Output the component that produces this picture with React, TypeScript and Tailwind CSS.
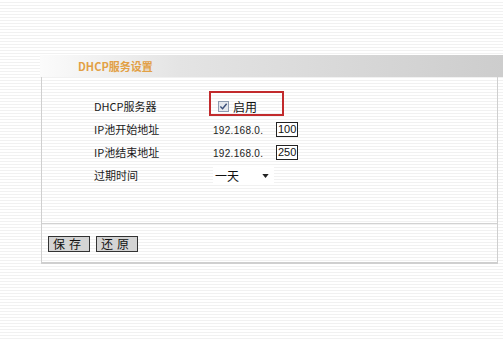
import { ChevronDown } from "lucide-react";

const CJK = "font-['SimSun','Noto_Sans_CJK_SC',sans-serif]";

function Row({ label, children }: { label: string; children: React.ReactNode }) {
	return (
		<div className="flex h-[23px] items-center">
			<div className={`w-[119px] text-[11px] text-[#1a1a1a] ${CJK}`}>{label}</div>
			<div className="relative flex items-center">{children}</div>
		</div>
	);
}

function IpInput({ value }: { value: string }) {
	return (
		<div className="flex items-center">
			<span className="w-[63px] pt-[2px] font-['Liberation_Sans',sans-serif] text-[10px] tracking-[0.3px] text-[#222]">
				192.168.0.
			</span>
			<span className="flex h-[15px] w-[22px] items-center border border-[#222] bg-white pl-[1px] font-['Liberation_Sans',sans-serif] text-[11px] leading-none text-[#111]">
				{value}
			</span>
		</div>
	);
}

export default function App() {
	return (
		<div className="h-[339px] w-[503px] overflow-hidden bg-[repeating-linear-gradient(to_bottom,#ffffff_0px,#ffffff_2px,#f1f1f1_2px,#f1f1f1_3px)] pt-[55px]">
			<div className="ml-[40px] flex h-[22px] items-center bg-[linear-gradient(to_right,#fbfbfb_0%,#e4e4e4_30%,#cdcdcd_100%)] pl-[38px]">
				<span className={`text-[11px] font-bold text-[#e2a045] ${CJK}`}>DHCP服务设置</span>
			</div>
			<div className="ml-[41px] mr-[5px] h-[187px] border-b-2 border-l border-r border-[#cfcfcf]">
				<div className="h-[147px] border-b border-[#d2d2d2] pl-[52px] pt-[18px]">
					<Row label="DHCP服务器">
						<div className="absolute -top-[7px] -left-[4px] h-[25px] w-[75px] border-2 border-[#c22a2c]" />
						<div className="ml-[5px] flex items-center gap-[4px]">
							<span className="flex h-[11px] w-[11px] items-center justify-center border border-[#8d9bb0] bg-[#e4e8ee]">
								<svg viewBox="0 0 10 10" className="h-[9px] w-[9px]">
									<path d="M1.5 5 L4 7.5 L8.5 2" fill="none" stroke="#3a4f7a" strokeWidth="1.6" />
								</svg>
							</span>
							<span className={`text-[12px] text-[#111] ${CJK}`}>启用</span>
						</div>
					</Row>
					<Row label="IP池开始地址">
						<IpInput value="100" />
					</Row>
					<Row label="IP池结束地址">
						<IpInput value="250" />
					</Row>
					<Row label="过期时间">
						<div className="flex h-[18px] w-[61px] items-center justify-between bg-white pl-[2px] pr-[5px]">
							<span className={`text-[12px] text-[#111] ${CJK}`}>一天</span>
							<svg viewBox="0 0 8 5" className="h-[4px] w-[7px]">
								<path d="M0 0 H8 L4 5 Z" fill="#222" />
							</svg>
						</div>
					</Row>
				</div>
				<div className="flex gap-[6px] pl-[6px] pt-[12px]">
					<button
						type="button"
						className={`flex h-[16px] w-[42px] items-center justify-center border border-[#333] bg-[#d4d4d4] text-[12px] tracking-[4px] text-[#111] ${CJK}`}
					>
						保存
					</button>
					<button
						type="button"
						className={`flex h-[16px] w-[42px] items-center justify-center border border-[#333] bg-[#d4d4d4] text-[12px] tracking-[4px] text-[#111] ${CJK}`}
					>
						还原
					</button>
				</div>
			</div>
		</div>
	);
}
